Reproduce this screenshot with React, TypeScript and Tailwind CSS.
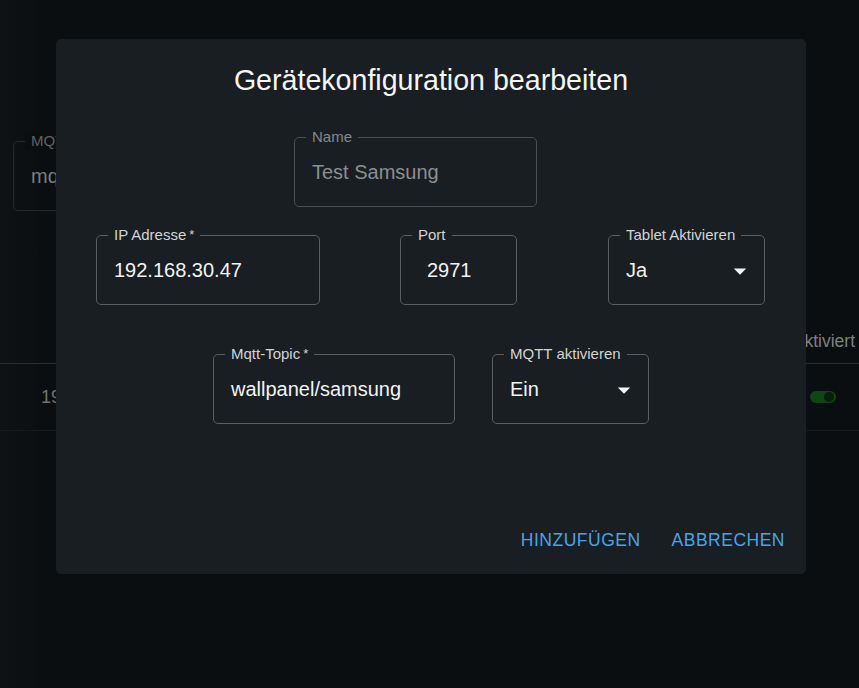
import React from "react";

const Field = ({
  label,
  value,
  width,
  disabled,
  required,
  select,
  padLeft = 17,
  className = "",
}: {
  label: string;
  value: string;
  width: number;
  disabled?: boolean;
  required?: boolean;
  select?: boolean;
  padLeft?: number;
  className?: string;
}) => (
  <div
    className={`relative h-[70px] shrink-0 rounded-[5px] border flex items-center ${
      disabled ? "border-[#4a4f52]" : "border-[#5a5f62]"
    } ${className}`}
    style={{ width }}
  >
    <span
      className={`absolute left-[11px] top-[-10px] bg-[#181e21] px-[6px] text-[15px] leading-[18px] whitespace-nowrap ${
        disabled ? "text-[#85898b]" : "text-[#d2d4d5]"
      }`}
    >
      {label}
      {required && <span className="ml-[3px] text-[13px] align-top">*</span>}
    </span>
    <span
      className={`text-[20px] leading-[24px] ${disabled ? "text-[#8b8f91]" : "text-[#f2f3f3]"}`}
      style={{ paddingLeft: padLeft }}
    >
      {value}
    </span>
    {select && (
      <svg
        className="absolute right-[9px] top-[20px]"
        width="30"
        height="30"
        viewBox="0 0 24 24"
        fill="#f2f3f3"
      >
        <path d="M7 10l5 5 5-5z" />
      </svg>
    )}
  </div>
);

export default function App() {
  return (
    <div
      className="relative w-[859px] h-[688px] overflow-hidden bg-[#0b0e10]"
      style={{ fontFamily: '"Liberation Sans", Arial, sans-serif' }}
    >
      {/* page behind */}
      <div className="absolute inset-y-0 left-0 w-[38px] bg-gradient-to-r from-[#0e1214] to-[#0c0f11]" />
      <div className="relative flex flex-col">
        <div className="h-[141px]" />
        <div className="ml-[13px] relative h-[70px] w-[260px] rounded-[5px] border border-[#262a2d] flex items-center">
          <span className="absolute left-[11px] top-[-10px] bg-[#0b0e10] px-[6px] text-[15px] leading-[18px] text-[#5f6365]">
            MQTT-Server
          </span>
          <span className="pl-[17px] text-[20px] text-[#7a7e80]">mqtt.local</span>
        </div>
        <div className="h-[120px]" />
        <div className="flex justify-end pr-[4px] text-[17.5px] leading-[20px] text-[#7d8183]">
          Aktiviert
        </div>
        <div className="h-[12px]" />
        <div className="h-px bg-[#2a2d2f]" />
        <div className="flex items-center justify-between h-[66px] pl-[41px] pr-[23px]">
          <span className="text-[18px] text-[#6f7375]">192.168.30.47</span>
          <div className="relative w-[26px] h-[12px] rounded-full bg-[#0c4812]">
            <div className="absolute right-[2px] top-[1px] w-[10px] h-[10px] rounded-full bg-[#0a1c0c]" />
          </div>
        </div>
        <div className="h-px bg-[#161a1c]" />
      </div>

      {/* dialog */}
      <div className="absolute left-[56px] top-[39px] w-[750px] h-[535px] rounded-[5px] bg-[#181e21] flex flex-col">
        <div className="pt-[24px] text-center text-[28.6px] leading-[34px] text-[#f4f5f5]">
          Gerätekonfiguration bearbeiten
        </div>
        <div className="mt-[40px] flex">
          <Field className="ml-[238px]" label="Name" value="Test Samsung" width={243} disabled />
        </div>
        <div className="mt-[28px] flex">
          <Field className="ml-[40px]" label="IP Adresse" required value="192.168.30.47" width={224} />
          <Field className="ml-[80px]" label="Port" value="2971" width={117} padLeft={26} />
          <Field className="ml-[91px]" label="Tablet Aktivieren" value="Ja" width={157} select />
        </div>
        <div className="mt-[49px] flex">
          <Field className="ml-[157px]" label="Mqtt-Topic" required value="wallpanel/samsung" width={242} />
          <Field className="ml-[37px]" label="MQTT aktivieren" value="Ein" width={157} select />
        </div>
        <div className="mt-auto flex justify-end gap-[11px] pr-[11px] pb-[11px]">
          <button className="h-[45px] px-[10px] text-[17.5px] tracking-[0.5px] text-[#4ba3e3] uppercase">
            Hinzufügen
          </button>
          <button className="h-[45px] px-[10px] text-[17.5px] tracking-[0.5px] text-[#4ba3e3] uppercase">
            Abbrechen
          </button>
        </div>
      </div>
    </div>
  );
}
